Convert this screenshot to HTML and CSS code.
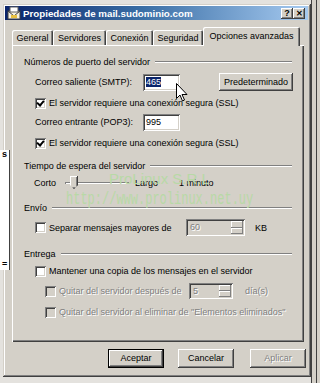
FILE: index.html
```html
<!DOCTYPE html>
<html lang="es">
<head>
  <meta charset="UTF-8" />
  <title>Propiedades de mail.sudominio.com</title>
  <link rel="stylesheet" href="styles.css">
</head>
<body>
  <div class="backwin"></div>
  <div class="backleft"><span>s</span><span class="eq">=</span></div>

  <div class="dialog">
    <!-- Title bar -->
    <div class="titlebar">
      <svg class="appicon" width="14" height="14" viewBox="0 0 14 14">
        <rect x="1" y="5" width="12" height="8" fill="#f4f0e0" stroke="#404040"/>
        <rect x="3" y="1" width="8" height="5" fill="#ffffff" stroke="#606060"/>
        <path d="M1 5 L7 10 L13 5" fill="none" stroke="#404040"/>
        <rect x="4" y="9" width="6" height="3" fill="#e8c040"/>
      </svg>
      <span class="title">Propiedades de mail.sudominio.com</span>
      <span class="capbtn">?</span>
      <span class="capbtn close">✕</span>
    </div>

    <!-- Tabs -->
    <div class="tabs">
      <div class="tab t-gen">General</div>
      <div class="tab t-srv">Servidores</div>
      <div class="tab t-con">Conexión</div>
      <div class="tab t-seg">Seguridad</div>
      <div class="tab active">Opciones avanzadas</div>
    </div>

    <div class="panel">
      <div class="group">
        <span>Números de puerto del servidor</span><i class="rule"></i>
      </div>

      <div class="row r-smtp">
        <span class="label">Correo saliente (SMTP):</span>
        <span class="field"><span class="sel">465</span></span>
        <span class="btn btn-def">Predeterminado</span>
      </div>
      <div class="row r-check">
        <span class="check on"></span>
        <span>El servidor requiere una conexión segura (SSL)</span>
      </div>
      <div class="row r-pop">
        <span class="label">Correo entrante (POP3):</span>
        <span class="field">995</span>
      </div>
      <div class="row r-check2">
        <span class="check on"></span>
        <span>El servidor requiere una conexión segura (SSL)</span>
      </div>

      <div class="group g-time">
        <span>Tiempo de espera del servidor</span><i class="rule"></i>
      </div>
      <div class="row r-slider">
        <span class="corto">Corto</span>
        <span class="track"><span class="thumb"></span></span>
        <span class="largo">Largo</span>
        <span>1 minuto</span>
      </div>

      <div class="group g-envio">
        <span>Envío</span><i class="rule"></i>
      </div>
      <div class="row r-sep">
        <span class="check"></span>
        <span class="sep-label">Separar mensajes mayores de</span>
        <span class="spin s-60"><span class="val">60</span><span class="arrows"><b></b><b></b></span></span>
        <span class="unit">KB</span>
      </div>

      <div class="group g-entrega">
        <span>Entrega</span><i class="rule"></i>
      </div>
      <div class="row r-keep">
        <span class="check"></span>
        <span>Mantener una copia de los mensajes en el servidor</span>
      </div>
      <div class="row r-q1 off">
        <span class="check dis"></span>
        <span class="q-label">Quitar del servidor después de</span>
        <span class="spin s-5"><span class="val">5</span><span class="arrows"><b></b><b></b></span></span>
        <span class="unit">día(s)</span>
      </div>
      <div class="row r-q2 off">
        <span class="check dis"></span>
        <span>Quitar del servidor al eliminar de "Elementos eliminados"</span>
      </div>
    </div>

    <div class="buttons">
      <span class="btn default">Aceptar</span>
      <span class="btn">Cancelar</span>
      <span class="btn off">Aplicar</span>
    </div>
  </div>

  <!-- watermark and pointer lie over the dialog -->
  <div class="mark mark-name">ProLinux S.R.L</div>
  <div class="mark mark-url">http://www.prolinux.net.uy</div>
  <svg class="cursor" width="12" height="19" viewBox="0 0 12 19">
    <path d="M0.5 0.5 L0.5 15.5 L4 12 L6.5 18 L8.5 17 L6 11.5 L11 11.5 Z" fill="#fff" stroke="#000" stroke-width="1"/>
  </svg>
</body>
</html>
```

FILE: styles.css
```css
body {
  margin: 0;
  width: 320px;
  height: 383px;
  overflow: hidden;
  position: relative;
  background: #e4e2de;
  font-family: "Liberation Sans", Arial, sans-serif;
  font-size: 9px;
  color: #000;
}

/* window behind the dialog, seen on the right */
.backwin {
  position: absolute;
  left: 311px;
  top: 0;
  width: 9px;
  height: 383px;
  background: #d4d0c8;
  border-left: 1px solid #404040;
  box-shadow: inset 4px 0 #d4d0c8, inset 5px 0 #404040;
}

.dialog {
  position: relative;
  margin: 4px 0 0 3px;
  width: 308px;
  height: 373px;
  box-sizing: border-box;
  padding: 2px 3px 0 2px;
  background: #d4d0c8;
  box-shadow: inset -1px -1px #404040, inset 1px 1px #d4d0c8,
              inset -2px -2px #808080, inset 2px 2px #fff;
}

/* a bit of the window behind, seen at the left edge */
.backleft {
  position: absolute;
  z-index: 2;
  left: 0;
  top: 150px;
  width: 9px;
  height: 120px;
  background: #fff;
  border-right: 1px solid #404040;
  font-weight: bold;
  font-size: 9px;
}

.backleft span {
  display: block;
  margin-left: 2px;
  line-height: 8px;
}

.backleft .eq {
  margin-top: 102px;
}

.titlebar {
  display: flex;
  align-items: center;
  height: 14px;
  padding: 0 3px 0 2px;
  background: linear-gradient(to right, #0a246a 0%, #3a6ea5 45%, #a6caf0 100%);
}

.appicon {
  flex: none;
}

.title {
  flex: 1;
  margin-left: 2px;
  color: #fff;
  font-weight: bold;
  font-size: 9.75px;
  white-space: nowrap;
}

.capbtn {
  width: 12px;
  height: 11px;
  box-sizing: border-box;
  background: #d4d0c8;
  font-weight: bold;
  font-size: 9px;
  line-height: 11px;
  text-align: center;
  box-shadow: inset -1px -1px #404040, inset 1px 1px #fff, inset -2px -2px #808080;
}

.close {
  font-size: 8px;
}

/* Tabs */
.tabs {
  display: flex;
  align-items: flex-end;
  height: 18px;
  margin-top: 7px;
  padding-left: 7px;
  position: relative;
  z-index: 1;
}

.tab {
  height: 15px;
  box-sizing: border-box;
  padding-top: 3px;
  text-align: center;
  white-space: nowrap;
  box-shadow: inset 1px 1px #fff, inset -1px 0 #404040, inset -2px 0 #808080;
  border-radius: 2px 2px 0 0;
}

.t-gen { width: 41px; }
.t-srv { width: 53px; }
.t-con { width: 47px; }
.t-seg { width: 50px; }

.tab.active {
  width: 97px;
  height: 19px;
  margin-bottom: -1px;
  padding-top: 4px;
  background: #d4d0c8;
}

.panel {
  margin-left: 7px;
  width: 292px;
  height: 297px;
  box-sizing: border-box;
  padding-top: 11px;
  box-shadow: inset 1px 1px #fff, inset -1px -1px #404040, inset -2px -2px #808080;
}

.group {
  display: flex;
  align-items: center;
  height: 12px;
  padding-left: 12px;
  white-space: nowrap;
}

.rule {
  flex: 1;
  height: 0;
  margin: 0 12px 0 5px;
  border-top: 1px solid #808080;
  border-bottom: 1px solid #fff;
}

.row {
  display: flex;
  align-items: center;
  padding-left: 23px;
  white-space: nowrap;
}

.label {
  width: 108px;
}

.field {
  width: 37px;
  height: 17px;
  box-sizing: border-box;
  padding: 3px 0 0 3px;
  background: #fff;
  box-shadow: inset 1px 1px #808080, inset -1px -1px #fff,
              inset 2px 2px #404040, inset -2px -2px #d4d0c8;
}

.sel {
  background: #0a246a;
  color: #fff;
}

.btn {
  display: inline-block;
  box-sizing: border-box;
  height: 19px;
  line-height: 19px;
  text-align: center;
  background: #d4d0c8;
  box-shadow: inset -1px -1px #404040, inset 1px 1px #fff, inset -2px -2px #808080;
}

.btn-def {
  width: 74px;
  height: 18px;
  line-height: 18px;
  margin-left: 39px;
}

.check {
  flex: none;
  width: 11px;
  height: 11px;
  box-sizing: border-box;
  margin-right: 3px;
  background: #fff;
  box-shadow: inset 1px 1px #808080, inset -1px -1px #fff,
              inset 2px 2px #404040, inset -2px -2px #d4d0c8;
  position: relative;
}

.check.on::after {
  content: "";
  position: absolute;
  left: 2px;
  top: 1px;
  width: 3px;
  height: 5px;
  border: solid #000;
  border-width: 0 2px 2px 0;
  transform: translate(1px, 0) rotate(40deg);
}

.check.dis {
  background: #d4d0c8;
}

.r-smtp { height: 20px; margin-top: 4px; }
.r-check { height: 14px; margin-top: 4px; }
.r-pop { height: 18px; margin-top: 3px; }
.r-check2 { height: 14px; margin-top: 5px; }
.g-time { margin-top: 10px; }
.r-slider { height: 16px; margin-top: 3px; padding-left: 22px; }
.g-envio { margin-top: 11px; }
.r-sep { height: 19px; margin-top: 4px; }
.g-entrega { margin-top: 11px; }
.r-keep { height: 14px; margin-top: 4px; }
.r-q1 { height: 18px; margin-top: 4px; padding-left: 33px; }
.r-q2 { height: 14px; margin-top: 5px; padding-left: 33px; }

.corto {
  width: 31px;
}

.track {
  position: relative;
  width: 64px;
  height: 2px;
  box-shadow: inset 1px 1px #808080, inset -1px -1px #fff;
}

.thumb {
  position: absolute;
  left: 5px;
  top: -6px;
  width: 8px;
  height: 13px;
  box-sizing: border-box;
  background: #d4d0c8;
  box-shadow: inset -1px -1px #404040, inset 1px 1px #fff, inset -2px -2px #808080;
  clip-path: polygon(0 0, 100% 0, 100% 70%, 50% 100%, 0 70%);
}

.largo {
  width: 44px;
  margin-left: 6px;
}

.sep-label {
  width: 137px;
}

.spin {
  display: flex;
  height: 17px;
  box-sizing: border-box;
  padding: 2px;
  background: #d4d0c8;
  box-shadow: inset 1px 1px #808080, inset -1px -1px #fff,
              inset 2px 2px #404040, inset -2px -2px #d4d0c8;
}

.s-60 { width: 59px; }
.s-5 { width: 44px; height: 16px; }

.spin .val {
  flex: 1;
  padding: 1px 0 0 2px;
  color: #808080;
  text-shadow: 1px 1px #fff;
}

.arrows {
  display: flex;
  flex-direction: column;
  width: 12px;
}

.arrows b {
  flex: 1;
  box-shadow: inset -1px -1px #808080, inset 1px 1px #fff;
}

.unit {
  margin-left: 10px;
}

.q-label {
  width: 130px;
}

.s-5 + .unit {
  margin-left: 12px;
}

.off {
  color: #808080;
  text-shadow: 1px 1px #fff;
}

.buttons {
  display: flex;
  margin-top: 7px;
  padding-left: 103px;
  gap: 14px;
}

.buttons .btn {
  width: 56px;
}

.buttons .btn.off {
  margin-left: 2px;
}

.btn.default {
  box-shadow: inset 0 0 0 1px #000, inset -2px -2px #404040,
              inset 2px 2px #fff, inset -3px -3px #808080;
}

/* overlays */
.mark {
  position: absolute;
  color: #b8d9a6;
  white-space: nowrap;
}

.mark-name {
  left: 109px;
  top: 170px;
  font-family: "Liberation Sans", Arial, sans-serif;
  font-size: 15px;
}

.mark-url {
  left: 66px;
  top: 189px;
  font-family: "Liberation Mono", "Courier New", monospace;
  font-size: 12px;
  transform: scaleY(1.5);
  transform-origin: top left;
}

.cursor {
  position: absolute;
  left: 176px;
  top: 83px;
}
```
